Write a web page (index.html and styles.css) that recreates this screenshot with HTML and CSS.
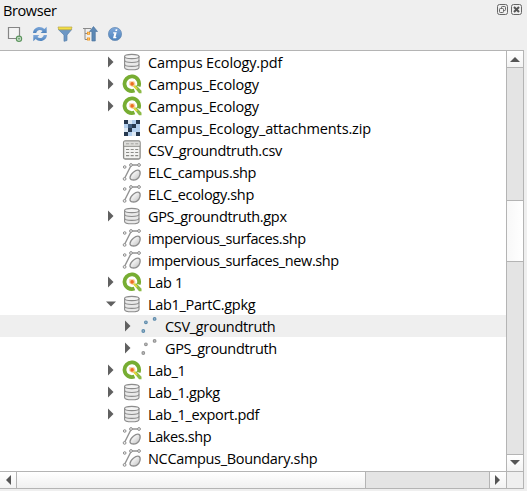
FILE: index.html
```
<!DOCTYPE html>
<html lang="en">
<head>
<meta charset="utf-8">
<title>Browser</title>
<link rel="stylesheet" href="styles.css">
</head>
<body>
<svg class="defs" width="0" height="0" aria-hidden="true">
  <defs>
    <linearGradient id="gray" x1="0" y1="0" x2="1" y2="1"><stop offset="0.2" stop-color="#fff"/><stop offset="1" stop-color="#bdbdbd"/></linearGradient>
    <linearGradient id="blue" x1="0" y1="0" x2="0" y2="1"><stop offset="0" stop-color="#7fa8da"/><stop offset="1" stop-color="#4e83bd"/></linearGradient>
    <symbol id="db" viewBox="0 0 20 20">
      <path d="M2.600 4.500v11c0 1.500 3.200 2.300 7.200 2.300s7.200-.8 7.200-2.300v-11z" fill="#e9e9e9" stroke="#8c8c8c" stroke-width="1.100"/>
      <ellipse cx="9.800" cy="4.500" rx="7.200" ry="2.100" fill="#f4f4f4" stroke="#8c8c8c" stroke-width="1.100"/>
      <path d="M2.600 8.300c0 1.500 3.200 2.200 7.200 2.200s7.200-.7 7.200-2.200M2.600 12.200c0 1.500 3.200 2.200 7.200 2.200s7.200-.7 7.200-2.200" fill="none" stroke="#8c8c8c" stroke-width="1.100"/>
    </symbol>
    <symbol id="qgis" viewBox="0 0 20 20">
      <path d="M12.500 16.500a7.300 7.300 0 1 1 4.100-4.100" fill="none" stroke="#77ad32" stroke-width="3.800"/>
      <path d="M11.500 12.500l2.800-1.200 5.200 5.400v2.500h-2.500z" fill="#8cba45"/>
      <path d="M11 11l4 4" stroke="#e3d83c" stroke-width="1.800"/>
      <path d="M7.200 7.200h5l1.400 3-3.100 2.700-3.300-1.900z" fill="#f8cd98"/>
      <circle cx="10.100" cy="9.900" r="1.800" fill="#ec6d20"/>
    </symbol>
    <symbol id="raster" viewBox="-1 -1 20 20">
      <path d="M1 1h16v16H1z" fill="#b3cfee"/>
      <path d="M5 1h4v4H5zM9 13h4v4H9zM1 9h4v4H1z" fill="#dce8f4"/>
      <path d="M1 1h4v4H1zM13 1h4v4h-4zM9 5h4v4H9zM5 9h4v4H5zM1 13h4v4H1zM13 13h4v4h-4z" fill="#26384f"/>
      <path d="M5 5h4v4H5z" fill="#405d80"/>
    </symbol>
    <symbol id="table" viewBox="0 0 20 20">
      <rect x="1.600" y="1" width="16.500" height="18" rx="1.500" fill="#f3f3f1" stroke="#8b8b87" stroke-width="1.300"/>
      <path d="M2.200 1.600h15.300v4H2.200z" fill="#dededb"/>
      <path d="M4 3.800h3.200m1.500 0h3m1.500 0h3" stroke="#a2a29e"/>
      <path d="M2 6.300h16" stroke="#8b8b87"/>
      <path d="M4 9.500h3.200m1.500 0h3m1.500 0h3M4 12.500h3.200m1.500 0h3m1.500 0h3M4 15.700h3.200m1.500 0h3m1.500 0h3" stroke="#8b8b87" stroke-width="1.200"/>
    </symbol>
    <symbol id="vector" viewBox="0 0 20 20">
      <path d="M2.500 16.500L8.800 4M9 3h7.500" stroke="#929292" stroke-width="1.400"/>
      <path d="M8 15.800c0-4 6-8.600 8.900-7.500 2.300 1.200 1.300 7.300-2.300 9-2.600 1.200-6.600.9-6.600-1.500z" fill="url(#gray)" stroke="#8e8e8e" stroke-width="1.300"/>
      <g fill="#eee" stroke="#8e8e8e"><circle cx="2.700" cy="5" r="1.300"/><circle cx="2.600" cy="16.900" r="1.400"/><circle cx="9" cy="3" r="1.400"/><circle cx="17" cy="3" r="1.400"/></g>
    </symbol>
    <symbol id="points" viewBox="0 0 20 20">
      <g fill="currentColor" fill-opacity=".45" stroke="currentColor" stroke-width="1.200"><circle cx="4.300" cy="15" r="1.300"/><circle cx="6.900" cy="6.300" r="1.300"/><circle cx="15.600" cy="2.900" r="1.300"/></g>
    </symbol>
    <symbol id="right" viewBox="0 0 6 12"><path d="M0 .5L5.500 6 0 11.500z" fill="#606060"/></symbol>
    <symbol id="down" viewBox="0 0 10 6"><path d="M0 .5h10L5 5.500z" fill="#606060"/></symbol>
  </defs>
</svg>
<div class="panel">
  <header class="title">
    <h1>Browser</h1>
    <div class="window-buttons">
      <svg width="11" height="11" viewBox="0 0 11 11" fill="none" stroke="#666"><rect x=".5" y=".5" width="10" height="10" rx="2"/><rect x="4.500" y="2.500" width="4" height="4" rx=".8"/><rect x="2.500" y="4.500" width="4" height="4" rx=".8" fill="#efefef"/></svg>
      <svg width="11" height="11" viewBox="0 0 11 11" fill="none" stroke="#666"><rect x=".5" y=".5" width="10" height="10" rx="2"/><path d="M3 3l5 5M8 3l-5 5" stroke="#555" stroke-width="2"/></svg>
    </div>
  </header>
  <div class="toolbar">
    <svg viewBox="0 0 16 16"><path d="M1.500 1.500h11v11h-11z" fill="#f3f3f3" stroke="#858585" stroke-width="1.200"/><circle cx="12" cy="12.700" r="2.600" fill="#eaf4ea" stroke="#5b955d" stroke-width="1.200"/><path d="M12 11.300v2.800m-1.400-1.400h2.800" stroke="#5b955d" stroke-width=".8"/></svg>
    <svg viewBox="0 0 16 16" fill="url(#blue)"><path d="M1 7C1.300 3.500 4 1 7.500 1c2 0 3.600.8 4.900 2L14.700.8V7H8.600l2-2C8.500 3.100 5 3.600 4.200 7z"/><path d="M15 9c-.3 3.500-3 6-6.500 6-2 0-3.600-.8-4.900-2l-2.300 2.200V9h6.100l-2 2c2.100 1.900 5.600 1.400 6.400-2z"/></svg>
    <svg viewBox="0 0 16 16"><path d="M1.300 3.500h13.400L10 9v5.500L7 15.300V9z" fill="#6d97c4" stroke="#5380ae" stroke-width=".7"/><path d="M1 1h14l-.7 2.700H1.700z" fill="#f4df43" stroke="#b7a64d" stroke-width=".7"/></svg>
    <svg viewBox="0 0 16 16"><path d="M1 2.500h8M3 3v10.500h2M3 7.500h2" stroke="#8a8a8a" fill="none"/><path d="M5.500 6.300h2v2h-2zM5.500 12h2v2h-2z" fill="#ffe2a0" stroke="#ee9d31" stroke-width="1.100"/><path d="M11.500.5l4 5h-2.200v9.500H9.900V5.500H7.500z" fill="#5d88b4" stroke="#446f9c" stroke-width=".6"/></svg>
    <svg viewBox="0 0 16 16"><circle cx="8" cy="8" r="6.600" fill="url(#blue)" stroke="#6388b2" stroke-width=".7"/><path d="M8.700 3.300h1.700L10 5.100H8.300zM6.300 6.300H9.700L8.500 11h1l-.3 1.200H6L7.300 7.500H6z" fill="#fff"/></svg>
  </div>
  <main class="frame">
    <ul class="tree">
      <li class="wide"><span class="arrow"><svg class="right"><use href="#right"/></svg></span><svg class="icon"><use href="#db"/></svg><span>Campus Ecology.pdf</span></li>
      <li class="wide"><span class="arrow"><svg class="right"><use href="#right"/></svg></span><svg class="icon"><use href="#qgis"/></svg><span>Campus_Ecology</span></li>
      <li class="wide"><span class="arrow"><svg class="right"><use href="#right"/></svg></span><svg class="icon"><use href="#qgis"/></svg><span>Campus_Ecology</span></li>
      <li class="wide"><span class="arrow"></span><svg class="icon"><use href="#raster"/></svg><span>Campus_Ecology_attachments.zip</span></li>
      <li><span class="arrow"></span><svg class="icon"><use href="#table"/></svg><span>CSV_groundtruth.csv</span></li>
      <li><span class="arrow"></span><svg class="icon"><use href="#vector"/></svg><span>ELC_campus.shp</span></li>
      <li><span class="arrow"></span><svg class="icon"><use href="#vector"/></svg><span>ELC_ecology.shp</span></li>
      <li><span class="arrow"><svg class="right"><use href="#right"/></svg></span><svg class="icon"><use href="#db"/></svg><span>GPS_groundtruth.gpx</span></li>
      <li class="narrow"><span class="arrow"></span><svg class="icon"><use href="#vector"/></svg><span>impervious_surfaces.shp</span></li>
      <li class="narrow"><span class="arrow"></span><svg class="icon"><use href="#vector"/></svg><span>impervious_surfaces_new.shp</span></li>
      <li><span class="arrow"><svg class="right"><use href="#right"/></svg></span><svg class="icon"><use href="#qgis"/></svg><span>Lab 1</span></li>
      <li><span class="arrow"><svg class="down"><use href="#down"/></svg></span><svg class="icon"><use href="#db"/></svg><span>Lab1_PartC.gpkg</span></li>
      <li class="child selected"><span class="arrow"><svg class="right"><use href="#right"/></svg></span><svg class="icon blue"><use href="#points"/></svg><span>CSV_groundtruth</span></li>
      <li class="child"><span class="arrow"><svg class="right"><use href="#right"/></svg></span><svg class="icon gray"><use href="#points"/></svg><span>GPS_groundtruth</span></li>
      <li><span class="arrow"><svg class="right"><use href="#right"/></svg></span><svg class="icon"><use href="#qgis"/></svg><span>Lab_1</span></li>
      <li><span class="arrow"><svg class="right"><use href="#right"/></svg></span><svg class="icon"><use href="#db"/></svg><span>Lab_1.gpkg</span></li>
      <li><span class="arrow"><svg class="right"><use href="#right"/></svg></span><svg class="icon"><use href="#db"/></svg><span>Lab_1_export.pdf</span></li>
      <li class="narrow"><span class="arrow"></span><svg class="icon"><use href="#vector"/></svg><span>Lakes.shp</span></li>
      <li><span class="arrow"></span><svg class="icon"><use href="#vector"/></svg><span>NCCampus_Boundary.shp</span></li>
    </ul>
    <div class="vbar">
      <div class="step"><svg width="10" height="5" viewBox="0 0 10 5"><path d="M0 5L5 0l5 5z" fill="#555"/></svg></div>
      <div class="track"><div class="thumb"></div></div>
      <div class="step"><svg width="10" height="5" viewBox="0 0 10 5"><path d="M0 0l5 5 5-5z" fill="#555"/></svg></div>
    </div>
    <div class="hbar">
      <div class="step"><svg width="5" height="10" viewBox="0 0 5 10"><path d="M5 0L0 5l5 5z" fill="#555"/></svg></div>
      <div class="track"><div class="thumb"></div></div>
      <div class="step"><svg width="5" height="10" viewBox="0 0 5 10"><path d="M0 0l5 5-5 5z" fill="#555"/></svg></div>
    </div>
    <div class="corner"></div>
  </main>
</div>
</body>
</html>
```
FILE: styles.css
```
* { box-sizing: border-box; }
body {
  margin: 0;
  overflow: hidden;
  background: #efefef;
  color: #000;
  font: 14.5px/22px "Open Sans", "Noto Sans", sans-serif;
}
svg { display: block; flex: none; }
.defs { position: absolute; }
.panel { height: 491px; display: flex; flex-direction: column; }
.title {
  height: 22px;
  padding: 0 5px 0 3px;
  display: flex;
  justify-content: space-between;
}
h1 { margin: 0; font-size: 14.5px; font-weight: 400; letter-spacing: -0.4px; line-height: 21px; }
.window-buttons { display: flex; gap: 3px; padding-top: 4px; }
.toolbar { height: 28px; padding: 4px 0 0 7px; display: flex; gap: 9px; }
.toolbar svg { width: 16px; height: 16px; }
.frame {
  width: 524px;
  height: 439px;
  border: solid #b4b4b4;
  border-width: 1px 1px 1px 0;
  background: #fff;
  display: grid;
  grid-template-columns: 506px 17px;
  grid-template-rows: 420px 17px;
}
.tree { margin: 0; padding: 0; list-style: none; overflow: hidden; }
.tree li {
  height: 22px;
  padding-left: 104px;
  display: flex;
  align-items: center;
  white-space: nowrap;
  letter-spacing: -0.33px;
}
.tree li > span:last-child { padding-top: 1px; }
.tree .wide { letter-spacing: -0.14px; }
.tree .narrow { letter-spacing: -0.4px; }
.tree .child { padding-left: 121px; }
.tree .selected { background: #efefef; }
.arrow { width: 18px; padding-left: 4px; flex: none; }
.right { width: 6px; height: 12px; }
.down { width: 10px; height: 6px; margin-left: -2px; }
.icon { width: 20px; height: 20px; margin-right: 6px; }
.blue { color: #5d8bac; }
.gray { color: #939393; }
.vbar { display: flex; flex-direction: column; border-left: 1px solid #b4b4b4; }
.hbar { display: flex; border-top: 1px solid #b4b4b4; }
.step { display: flex; align-items: center; justify-content: center; flex: none; background: linear-gradient(#fff, #f3f3f3); }
.vbar .step { height: 16px; }
.hbar .step { width: 16px; }
.hbar .step:last-child { padding-right: 1px; }
.vbar .step:last-child { padding-bottom: 1px; }
.track { flex: 1; background: #e4e4e4; }
.vbar .track { border: solid #b4b4b4; border-width: 1px 0; padding-top: 132px; }
.hbar .track { border: solid #b4b4b4; border-width: 0 1px; }
.vbar .thumb { height: 62px; border: solid #b4b4b4; border-width: 1px 0; background: linear-gradient(90deg, #f8f8f8, #fff); }
.hbar .thumb { width: 349px; height: 16px; border-right: 1px solid #b4b4b4; background: linear-gradient(#fff, #f0f0f0); }
.corner { border: solid #b4b4b4; border-width: 1px 0 0 1px; background: #efefef; }
```
